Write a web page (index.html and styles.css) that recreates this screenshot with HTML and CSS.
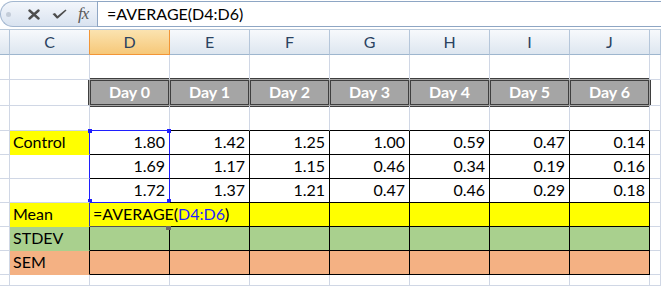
FILE: index.html
```html
<html>
	<head>
		<title>AVERAGE</title>
		<link rel="stylesheet" href="styles.css">
	</head>
	<body>

	<!-- Formula bar -->
	<div class="fbar">
		<div class="tools">
			<span class="dot"></span>
			<svg class="ico x" width="12" height="11" viewBox="0 0 12 11">
				<path d="M1.5 1.5 L10.5 9.5 M10.5 1.5 L1.5 9.5" stroke="#4d4d4d" stroke-width="2.4" stroke-linecap="round"/>
			</svg>
			<svg class="ico ok" width="15" height="10" viewBox="0 0 15 10">
				<path d="M0.5 5 L3 4 L5.5 7 L13.5 0.5 L14.5 1.5 L5.8 9.6 L4.8 9.6 Z" fill="#4d4d4d"/>
			</svg>
			<span class="fx">fx</span>
		</div>
		<div class="finput">=AVERAGE(D4:D6)</div>
	</div>

	<!-- Sheet -->
	<div class="sheet">
		<div class="row">
			<div class="c hd"></div>
			<div class="c hd pre">C</div>
			<div class="c hd sel">D</div>
			<div class="c hd">E</div>
			<div class="c hd">F</div>
			<div class="c hd">G</div>
			<div class="c hd">H</div>
			<div class="c hd">I</div>
			<div class="c hd">J</div>
			<div class="c hd"></div>
		</div>

		<div class="row">
			<div class="c rh"></div>
			<div class="c"></div>
			<div class="c above"></div>
			<div class="c above"></div>
			<div class="c above"></div>
			<div class="c above"></div>
			<div class="c above"></div>
			<div class="c above"></div>
			<div class="c above"></div>
			<div class="c"></div>
		</div>

		<div class="row">
			<div class="c rh"></div>
			<div class="c pre-day"></div>
			<div class="c day">Day 0</div>
			<div class="c day">Day 1</div>
			<div class="c day">Day 2</div>
			<div class="c day">Day 3</div>
			<div class="c day">Day 4</div>
			<div class="c day">Day 5</div>
			<div class="c day">Day 6</div>
			<div class="c post-day"></div>
		</div>

		<div class="row">
			<div class="c rh"></div>
			<div class="c"></div>
			<div class="c top rng-bot"></div>
			<div class="c top"></div>
			<div class="c top"></div>
			<div class="c top"></div>
			<div class="c top"></div>
			<div class="c top"></div>
			<div class="c top"></div>
			<div class="c"></div>
		</div>

		<div class="row">
			<div class="c rh"></div>
			<div class="c lab yellow rng-side">Control</div>
			<div class="c num box rng">1.80<span class="hdl tl"></span><span class="hdl tr"></span></div>
			<div class="c num box">1.42</div>
			<div class="c num box">1.25</div>
			<div class="c num box">1.00</div>
			<div class="c num box">0.59</div>
			<div class="c num box">0.47</div>
			<div class="c num box">0.14</div>
			<div class="c"></div>
		</div>

		<div class="row">
			<div class="c rh"></div>
			<div class="c rng-side"></div>
			<div class="c num box rng">1.69</div>
			<div class="c num box">1.17</div>
			<div class="c num box">1.15</div>
			<div class="c num box">0.46</div>
			<div class="c num box">0.34</div>
			<div class="c num box">0.19</div>
			<div class="c num box">0.16</div>
			<div class="c"></div>
		</div>

		<div class="row">
			<div class="c rh"></div>
			<div class="c rng-side"></div>
			<div class="c num box rng rng-bot">1.72<span class="hdl bl"></span><span class="hdl br"></span></div>
			<div class="c num box">1.37</div>
			<div class="c num box">1.21</div>
			<div class="c num box">0.47</div>
			<div class="c num box">0.46</div>
			<div class="c num box">0.29</div>
			<div class="c num box">0.18</div>
			<div class="c"></div>
		</div>

		<div class="row">
			<div class="c rh"></div>
			<div class="c lab yellow act">Mean</div>
			<div class="c box yellow formula">=AVERAGE(<span class="ref">D4:D6</span>)<span class="fill-h"></span></div>
			<div class="c box yellow"></div>
			<div class="c box yellow"></div>
			<div class="c box yellow"></div>
			<div class="c box yellow"></div>
			<div class="c box yellow"></div>
			<div class="c box yellow"></div>
			<div class="c"></div>
		</div>

		<div class="row">
			<div class="c rh"></div>
			<div class="c lab green edge">STDEV</div>
			<div class="c box green"></div>
			<div class="c box green"></div>
			<div class="c box green"></div>
			<div class="c box green"></div>
			<div class="c box green"></div>
			<div class="c box green"></div>
			<div class="c box green"></div>
			<div class="c"></div>
		</div>

		<div class="row">
			<div class="c rh"></div>
			<div class="c lab orange edge">SEM</div>
			<div class="c box orange"></div>
			<div class="c box orange"></div>
			<div class="c box orange"></div>
			<div class="c box orange"></div>
			<div class="c box orange"></div>
			<div class="c box orange"></div>
			<div class="c box orange"></div>
			<div class="c"></div>
		</div>

		<div class="row">
			<div class="c rh"></div>
			<div class="c"></div>
			<div class="c"></div>
			<div class="c"></div>
			<div class="c"></div>
			<div class="c"></div>
			<div class="c"></div>
			<div class="c"></div>
			<div class="c"></div>
			<div class="c"></div>
		</div>
	</div>

	</body>
</html>
```

FILE: styles.css
```css
body {
	margin: 0;
	width: 661px;
	height: 287px;
	overflow: hidden;
	background: #fff;
	font-family: Lato, "Liberation Sans", sans-serif;
}

/* Formula bar */
.fbar {
	display: flex;
	height: 26px;
	margin: 1px 0 2px;
}

.tools {
	width: 96px;
	display: flex;
	align-items: center;
	border: 1px solid #a3b7d0;
	border-right: none;
	border-radius: 13px 0 0 13px;
	background: linear-gradient(#f3f6fb, #d9e3f0);
}

.dot {
	width: 5px;
	height: 5px;
	margin-left: 5px;
	border-radius: 50%;
	background: #c3ccd8;
}

.ico {
	display: block;
}

.ico.x {
	margin-left: 17px;
}

.ico.ok {
	margin-left: 12px;
}

.fx {
	margin-left: 11px;
	font-family: "Liberation Serif", serif;
	font-style: italic;
	font-size: 17px;
	color: #5a5a5a;
	letter-spacing: -1px;
}

.finput {
	flex: 1;
	border: 1px solid #8ea6c4;
	border-right: none;
	padding-left: 9px;
	font-size: 16px;
	line-height: 23px;
	color: #000;
}

/* Sheet grid */
.sheet {
	display: grid;
	grid-template-columns: 10px repeat(8, 80px) 1fr;
	grid-template-rows: 25px 25px 26px 25px repeat(6, 24px) 1fr;
	height: 256px;
	border-top: 1px solid #b9c9da;
}

.row {
	display: contents;
}

.c {
	display: flex;
	align-items: flex-end;
	padding: 0 3px 3px;
	border-right: 1px solid #d0d7e5;
	border-bottom: 1px solid #d0d7e5;
	font-size: 16px;
	line-height: 18px;
	white-space: nowrap;
	color: #000;
	min-width: 0;
}

/* Column headers */
.hd {
	justify-content: center;
	align-items: center;
	padding: 0;
	background: linear-gradient(#f7f9fc, #dde6f0);
	border-right-color: #b5c6da;
	border-bottom-color: #9eb6ce;
	color: #2a4260;
}

.hd.pre {
	border-right-color: #f29536;
}

.hd.sel {
	background: linear-gradient(#fbe3b0, #f6c879);
	border-right-color: #f29536;
	border-bottom-color: #f29536;
}

/* Day header block (double border) */
.above {
	border-bottom-color: #a5a5a5;
	box-shadow: inset 0 -1px 0 #3f3f3f;
}

.pre-day {
	border-right-color: #a5a5a5;
	box-shadow: inset -1px 0 0 #3f3f3f;
}

.post-day {
	box-shadow: inset 1px 0 0 #3f3f3f;
}

.day {
	justify-content: center;
	align-items: center;
	padding: 0 0 1px;
	background: #a5a5a5;
	border-right-color: #a5a5a5;
	border-bottom-color: #a5a5a5;
	box-shadow: inset 0 0 0 1px #3f3f3f;
	color: #fff;
	font-weight: 700;
}

.top {
	border-bottom-color: #000;
	box-shadow: inset 0 1px 0 #3f3f3f;
}

/* Data */
.num {
	justify-content: flex-end;
	padding-right: 4px;
}

.box {
	border-right-color: #000;
	border-bottom-color: #000;
}

.edge {
	border-right-color: #000;
}

.yellow {
	background: #ffff00;
}

.green {
	background: #a9d08e;
}

.orange {
	background: #f4b183;
}

.lab.yellow {
	border-bottom-color: #ffff00;
}

.lab.green {
	border-bottom-color: #a9d08e;
}

.lab.orange {
	border-bottom-color: #f4b183;
}

/* Referenced range D4:D6 */
.rng-side {
	border-right-color: #1f1fff;
}

.rng {
	position: relative;
	border-right-color: #1f1fff;
}

.rng-bot {
	border-bottom-color: #1f1fff;
}

.hdl {
	position: absolute;
	width: 4px;
	height: 4px;
	background: #1f1fff;
}

.hdl.tl { left: -2px; top: -2px; }
.hdl.tr { right: -2px; top: -2px; }
.hdl.bl { left: -2px; bottom: 0; height: 3px; }
.hdl.br { right: -2px; bottom: 0; height: 3px; }

/* Active cell being edited */
.act {
	border-right-color: #3a3aa8;
}

.formula {
	position: relative;
	z-index: 1;
	border-right-color: #ffff00;
	border-bottom-color: #555;
}

.ref {
	color: #1f1fff;
}

.fill-h {
	position: absolute;
	right: -2px;
	bottom: -4px;
	width: 5px;
	height: 4px;
	background: #6b6b6b;
}
```
